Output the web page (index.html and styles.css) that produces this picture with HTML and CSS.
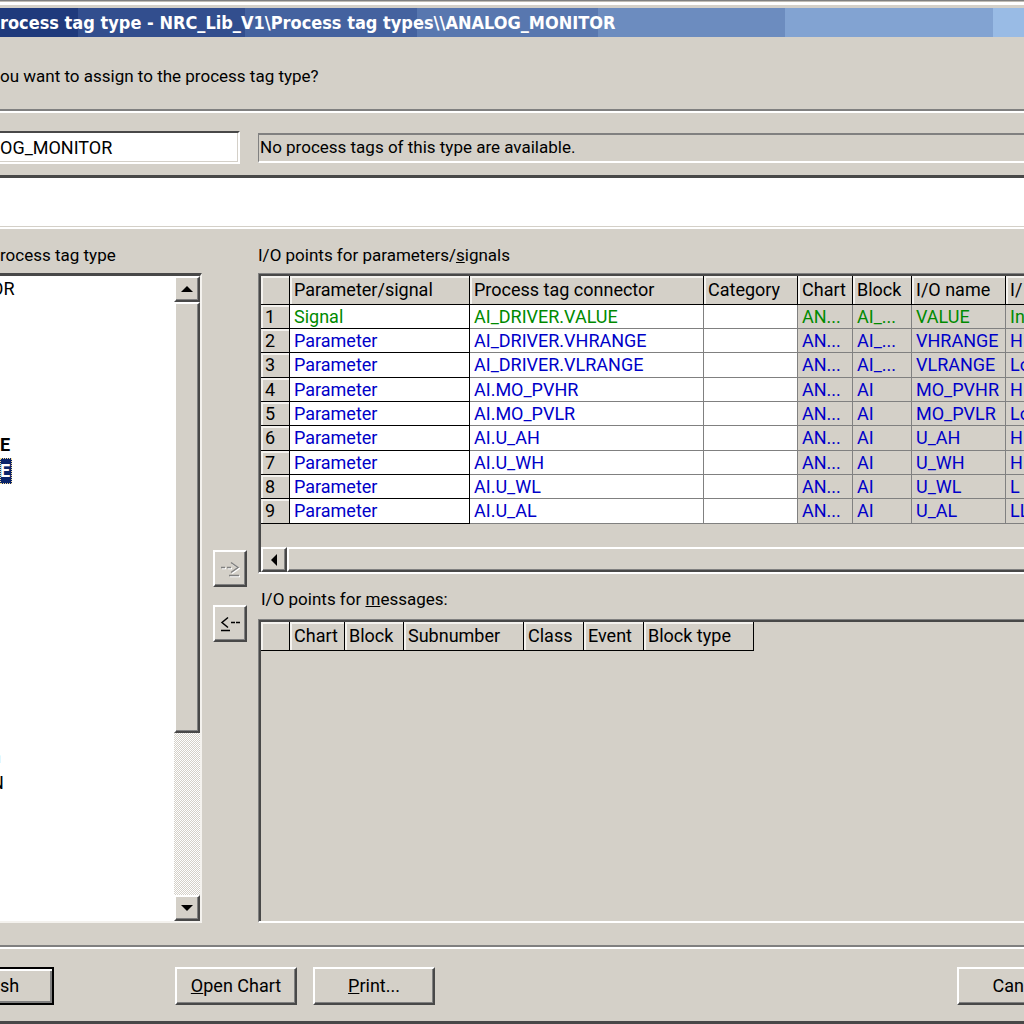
FILE: index.html
```html
<!DOCTYPE html>
<html lang="en">
<head>
    <meta charset="UTF-8">
    <meta name="viewport" content="width=device-width, initial-scale=1.0">
    <title>Process tag type - ANALOG_MONITOR</title>
    <link rel="stylesheet" href="styles.css">
</head>
<body>
    <div class="dialog">
        <h1 class="titlebar">rocess tag type - NRC_Lib_V1\Process tag types\\ANALOG_MONITOR</h1>

        <p class="question">ou want to assign to the process tag type?</p>

        <div class="name-row">
            <input type="text" class="name-input" value="OG_MONITOR" aria-label="Process tag type name">
            <div class="status">No process tags of this type are available.</div>
        </div>

        <textarea class="comment" aria-label="Comment"></textarea>

        <main class="content">
            <section class="tree-col">
                <h2 class="label">rocess tag type</h2>
                <div class="tree">
                    <ul class="tree-list">
                        <li>OR</li>
                        <li></li>
                        <li></li>
                        <li></li>
                        <li></li>
                        <li></li>
                        <li class="used">E</li>
                        <li class="used"><span class="current">E</span></li>
                        <li></li>
                        <li></li>
                        <li></li>
                        <li></li>
                        <li></li>
                        <li></li>
                        <li></li>
                        <li></li>
                        <li></li>
                        <li></li>
                        <li>n</li>
                        <li>N</li>
                    </ul>
                    <div class="scroll-v">
                        <button class="scroll-btn" aria-label="Scroll up"><svg width="12" height="6" viewBox="0 0 12 6"><path d="M6 0L12 6H0z"/></svg></button>
                        <div class="thumb-v"></div>
                        <div class="track-v"></div>
                        <button class="scroll-btn" aria-label="Scroll down"><svg width="12" height="6" viewBox="0 0 12 6"><path d="M0 0H12L6 6z"/></svg></button>
                    </div>
                </div>
            </section>

            <div class="move-col">
                <button class="move-btn" aria-label="Add" disabled>
                    <svg width="20" height="18" viewBox="0 0 20 18">
                        <path class="light" d="M2 8.5h4M8 8.5h4M12 3.5l7 5l-7 5M10 16.5h10"/>
                        <path d="M1 7.5h4M7 7.5h4M11 2.5l7 5l-7 5M9 15.5h10"/>
                    </svg>
                </button>
                <button class="move-btn" aria-label="Remove">
                    <svg width="20" height="18" viewBox="0 0 20 18">
                        <path d="M8 2.5L2 7.5l6 5M1 15.5h9M11 7.5h4M16 7.5h4"/>
                    </svg>
                </button>
            </div>

            <section class="grid-col">
                <h2 class="label">I/O points for parameters/<u>s</u>ignals</h2>
                <div class="grid-box params">
                    <table class="grid">
                        <colgroup>
                            <col class="c-num"><col class="c-param"><col class="c-conn"><col class="c-cat"><col class="c-chart"><col class="c-block"><col class="c-io"><col class="c-rest">
                        </colgroup>
                        <thead>
                            <tr><th></th><th>Parameter/signal</th><th>Process tag connector</th><th>Category</th><th>Chart</th><th>Block</th><th>I/O name</th><th>I/</th></tr>
                        </thead>
                        <tbody>
                            <tr class="signal"><th>1</th><td>Signal</td><td>AI_DRIVER.VALUE</td><td></td><td>AN...</td><td>AI_...</td><td>VALUE</td><td>In</td></tr>
                            <tr><th>2</th><td>Parameter</td><td>AI_DRIVER.VHRANGE</td><td></td><td>AN...</td><td>AI_...</td><td>VHRANGE</td><td>H</td></tr>
                            <tr><th>3</th><td>Parameter</td><td>AI_DRIVER.VLRANGE</td><td></td><td>AN...</td><td>AI_...</td><td>VLRANGE</td><td>Lo</td></tr>
                            <tr><th>4</th><td>Parameter</td><td>AI.MO_PVHR</td><td></td><td>AN...</td><td>AI</td><td>MO_PVHR</td><td>H</td></tr>
                            <tr><th>5</th><td>Parameter</td><td>AI.MO_PVLR</td><td></td><td>AN...</td><td>AI</td><td>MO_PVLR</td><td>Lo</td></tr>
                            <tr><th>6</th><td>Parameter</td><td>AI.U_AH</td><td></td><td>AN...</td><td>AI</td><td>U_AH</td><td>H</td></tr>
                            <tr><th>7</th><td>Parameter</td><td>AI.U_WH</td><td></td><td>AN...</td><td>AI</td><td>U_WH</td><td>H</td></tr>
                            <tr><th>8</th><td>Parameter</td><td>AI.U_WL</td><td></td><td>AN...</td><td>AI</td><td>U_WL</td><td>L</td></tr>
                            <tr><th>9</th><td>Parameter</td><td>AI.U_AL</td><td></td><td>AN...</td><td>AI</td><td>U_AL</td><td>LL</td></tr>
                        </tbody>
                    </table>
                    <div class="scroll-h">
                        <button class="scroll-btn" aria-label="Scroll left"><svg width="6" height="12" viewBox="0 0 6 12"><path d="M6 0V12L0 6z"/></svg></button>
                        <div class="thumb-h"></div>
                    </div>
                </div>

                <h2 class="label label-msg">I/O points for <u>m</u>essages:</h2>
                <div class="grid-box messages">
                    <table class="grid grid-msg">
                        <colgroup>
                            <col class="c-num"><col class="c-chart"><col class="c-block"><col class="c-sub"><col class="c-class"><col class="c-class"><col class="c-type">
                        </colgroup>
                        <thead>
                            <tr><th></th><th>Chart</th><th>Block</th><th>Subnumber</th><th>Class</th><th>Event</th><th>Block type</th></tr>
                        </thead>
                    </table>
                </div>
            </section>
        </main>

        <footer class="footer">
            <button class="btn btn-default">sh</button>
            <button class="btn"><u>O</u>pen Chart</button>
            <button class="btn"><u>P</u>rint...</button>
            <button class="btn btn-cancel">Can</button>
        </footer>
    </div>
</body>
</html>
```
FILE: styles.css
```css
:root {
    --face: #d4d0c8;
    --shadow: #808080;
    --dark: #484848;
    --blue: #0000c8;
    --green: #008a00;
}

* {
    box-sizing: border-box;
}

body {
    margin: 0;
    background: var(--face);
    color: #000;
    font-family: Roboto, "Liberation Sans", sans-serif;
    font-size: 18px;
    line-height: 24px;
}

button, input, textarea {
    font: inherit;
    color: inherit;
    border-radius: 0;
}

.dialog {
    display: flex;
    flex-direction: column;
    min-height: 100vh;
    padding-top: 4px;
    border-top: 1px solid var(--shadow);
    border-bottom: 3px solid var(--dark);
    box-shadow: inset 0 1px #c0bcb4, inset 0 4px #fff;
    overflow: hidden;
}

.titlebar {
    margin: 3px 0 0;
    height: 29px;
    line-height: 29px;
    font-family: "DejaVu Sans Condensed", "DejaVu Sans", sans-serif;
    font-size: 18px;
    font-weight: bold;
    color: #fff;
    white-space: nowrap;
    background: linear-gradient(to right,
        #1f3a7c 0 78px,
        #324e8e 78px 245px,
        #44629f 245px 417px,
        #5877af 417px 598px,
        #6c8cbf 598px 785px,
        #82a3d2 785px 993px,
        #99bbe5 993px);
}

.question {
    margin: 0;
    height: 76px;
    padding-top: 27px;
    font-size: 17px;
    border-bottom: 2px solid #fff;
    box-shadow: inset 0 -2px var(--shadow);
}

.name-row {
    display: flex;
    align-items: center;
    gap: 18px;
    padding: 18px 0 11px;
}

.name-input {
    width: 240px;
    height: 33px;
    padding: 0;
    background: #fff;
    border: 2px solid;
    border-color: var(--dark) #fff #fff;
    border-left: 0;
    box-shadow: inset -1px -1px var(--face);
    outline: 0;
}

.status {
    flex: 1;
    height: 30px;
    padding-left: 1px;
    font-size: 17px;
    border: 1px solid var(--shadow);
    border-width: 2px 0 0 1px;
    border-bottom: 2px solid #fff;
}

.comment {
    display: block;
    width: 100%;
    height: 54px;
    resize: none;
    outline: 0;
    background: #fff;
    border: 0;
    border-top: 3px solid var(--dark);
    border-bottom: 2px solid #fff;
    box-shadow: inset 0 -1px var(--face);
}

.content {
    display: flex;
    flex: 1;
    padding: 14px 0 22px;
}

.label {
    margin: 0 0 6px;
    font-size: 17px;
    font-weight: normal;
    white-space: nowrap;
}

.tree-col {
    display: flex;
    flex-direction: column;
    width: 202px;
}

.tree {
    display: flex;
    flex: 1;
    background: #fff;
    border: 2px solid;
    border-color: var(--dark) #f4f2ee #f4f2ee;
    border-top-width: 3px;
    border-left: 0;
    overflow: hidden;
}

.tree-list {
    flex: 1;
    margin: 0 0 0 -9px;
    padding: 0;
    list-style: none;
}

.tree-list li {
    height: 26px;
    line-height: 26px;
}

.tree-list .used {
    padding-left: 9px;
    font-weight: bold;
}

.current {
    display: inline-block;
    padding-right: 2px;
    color: #fff;
    background: #0a246a;
    outline: 1px dotted #f5db95;
    outline-offset: -1px;
}

.scroll-v {
    display: flex;
    flex-direction: column;
    width: 26px;
}

.scroll-btn,
.thumb-v,
.thumb-h {
    background: var(--face);
    border: 2px solid;
    border-color: #fff var(--dark) var(--dark) #fff;
    box-shadow: inset -1px -1px var(--shadow);
}

.scroll-btn {
    display: flex;
    align-items: center;
    justify-content: center;
    flex: none;
    width: 26px;
    height: 26px;
    padding: 0;
}

.thumb-v {
    flex: 430;
}

.track-v {
    flex: 163;
    background: repeating-conic-gradient(#fff 0 25%, var(--face) 0 50%) 0 0 / 2px 2px;
}

.move-col {
    display: flex;
    flex-direction: column;
    gap: 18px;
    width: 56px;
    padding: 307px 0 0 11px;
}

.move-btn {
    width: 34px;
    height: 37px;
    padding: 6px 0 0;
    background: var(--face);
    border: 2px solid;
    border-color: #fff var(--dark) var(--dark) #fff;
    box-shadow: inset -1px -1px var(--shadow);
}

.move-btn path {
    fill: none;
    stroke: #000;
    stroke-width: 1.5;
}

.move-btn:disabled path {
    stroke: var(--shadow);
}

.move-btn:disabled .light {
    stroke: #fff;
}

.grid-col {
    display: flex;
    flex-direction: column;
    flex: 1;
    min-width: 0;
}

.grid-box {
    padding: 2px 0 0 2px;
    border: 1px solid var(--shadow);
    border-right: 0;
    border-bottom: 2px solid #fff;
    box-shadow: inset 2px 2px var(--dark);
    overflow: hidden;
}

.params {
    display: flex;
    flex-direction: column;
    justify-content: space-between;
    height: 301px;
}

.messages {
    flex: 1;
}

.label-msg {
    margin: 13px 0 8px 3px;
}

.grid {
    width: 100%;
    table-layout: fixed;
    border-collapse: separate;
    border-spacing: 0;
}

.grid-msg {
    width: 493px;
}

.c-num { width: 29px; }
.c-param { width: 180px; }
.c-conn { width: 234px; }
.c-cat { width: 94px; }
.c-chart { width: 55px; }
.c-block { width: 59px; }
.c-io { width: 94px; }
.c-sub { width: 120px; }
.c-class { width: 60px; }
.c-type { width: 110px; }

.grid th,
.grid td {
    height: 24px;
    padding: 0 0 0 4px;
    line-height: 22px;
    font-weight: normal;
    text-align: left;
    white-space: nowrap;
    overflow: hidden;
    border-right: 1px solid var(--shadow);
    border-bottom: 1px solid var(--shadow);
}

.grid th {
    border-color: #000;
    box-shadow: inset 2px 2px #f4f2ee;
}

.grid thead th {
    height: 29px;
}

.grid tbody tr:nth-child(3n) > * {
    height: 25px;
}

.grid td {
    color: var(--blue);
}

.grid .signal td {
    color: var(--green);
}

.grid td:nth-child(-n+4) {
    background: #fff;
}

.grid td:nth-child(2) {
    border-color: #000;
}

.params th:last-child,
.params td:last-child {
    border-right: 0;
}

.scroll-h {
    display: flex;
    height: 25px;
}

.scroll-h .scroll-btn {
    height: 25px;
}

.thumb-h {
    flex: 1;
    border-right: 0;
    box-shadow: inset 0 -1px var(--shadow);
}

.footer {
    display: flex;
    height: 76px;
    padding-top: 20px;
    border-top: 2px solid var(--shadow);
    box-shadow: inset 0 2px #fff;
}

.btn {
    width: 122px;
    height: 38px;
    margin-right: 16px;
    padding: 0;
    background: var(--face);
    border: 2px solid;
    border-color: #fff var(--dark) var(--dark) #fff;
    box-shadow: inset -1px -1px var(--shadow);
}

.btn-default {
    width: 54px;
    margin-right: 121px;
    text-align: left;
    border-color: #000;
    border-left: 0;
    box-shadow: inset 0 2px #fff, inset -2px -2px var(--shadow);
}

.btn-cancel {
    width: 67px;
    margin-left: auto;
    margin-right: 0;
    text-align: right;
    border-right: 0;
    box-shadow: inset 0 -1px var(--shadow);
}
```
